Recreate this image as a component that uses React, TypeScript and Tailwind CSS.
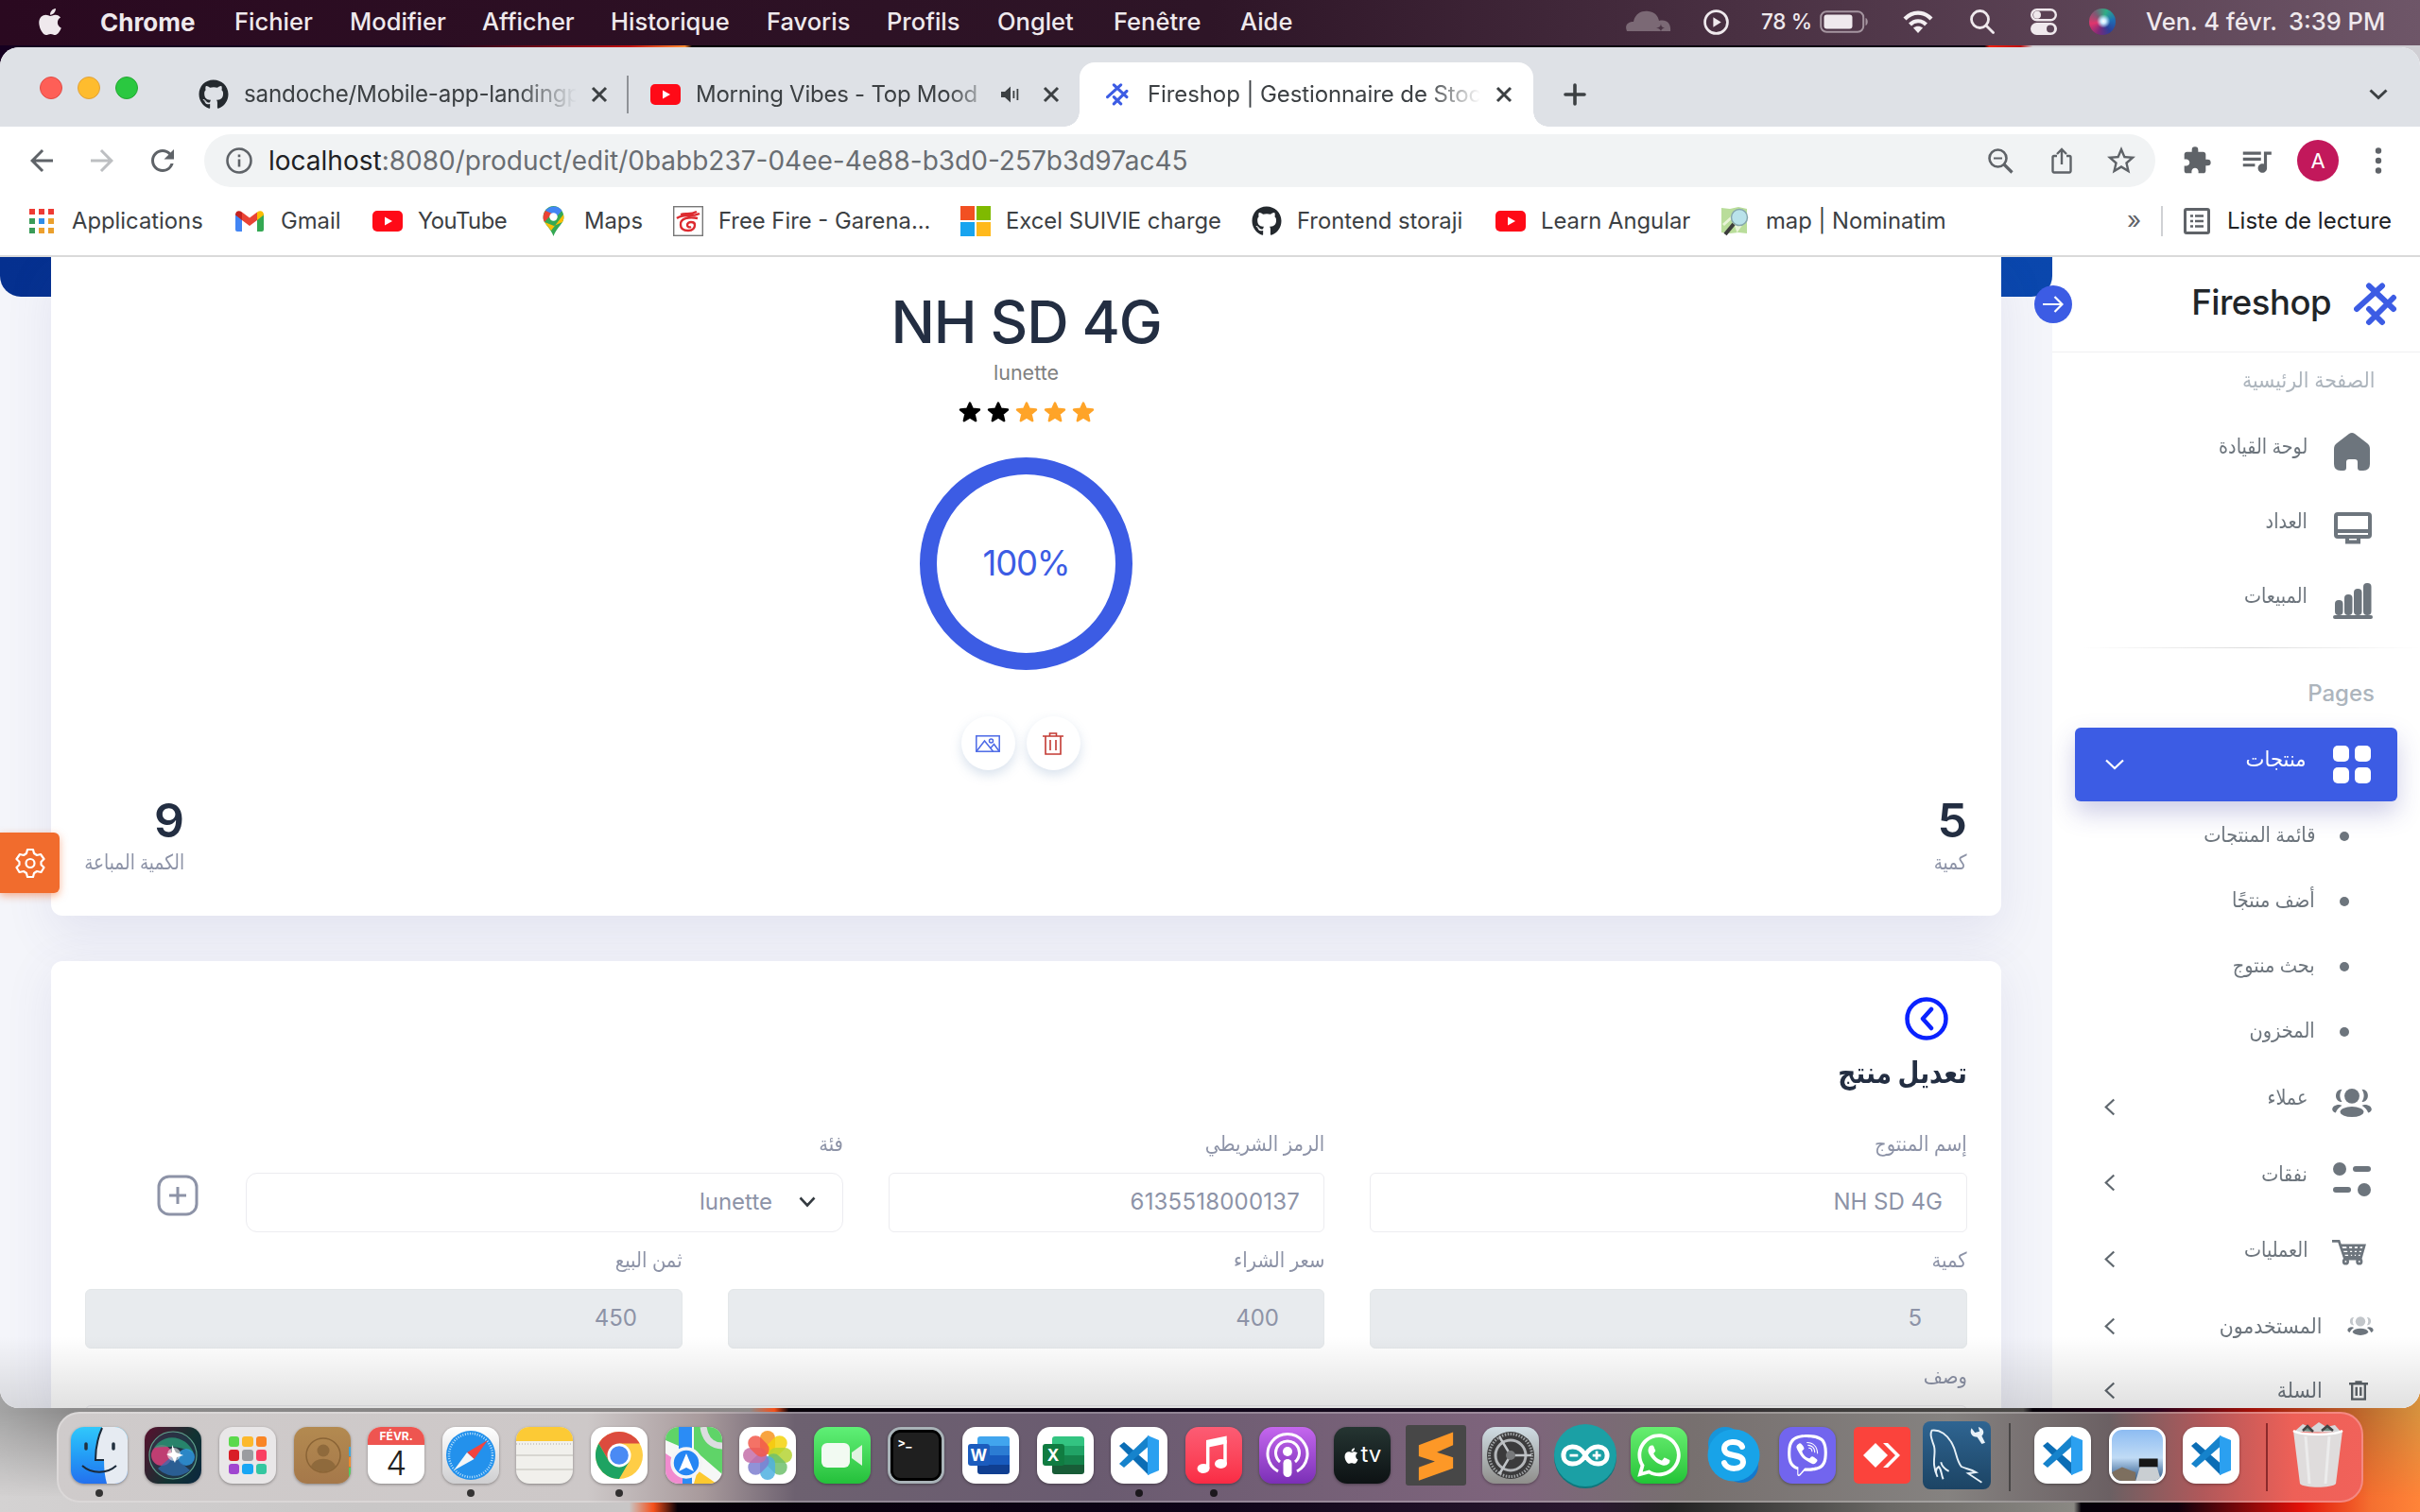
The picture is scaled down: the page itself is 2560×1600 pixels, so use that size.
import React from "react";
import { FaApple, FaGithub, FaWhatsapp, FaViber } from "react-icons/fa";
import { MdExtension, MdQueueMusic, MdStarBorder, MdArrowBack, MdArrowForward, MdRefresh } from "react-icons/md";

type Kids = { children?: React.ReactNode };

/* ---------- shared drawings ---------- */

const YouTube = () => (
  <svg viewBox="0 0 32 22" className="h-[22px] w-8 shrink-0">
    <rect width="32" height="22" rx="5" fill="#ff0a17" />
    <path d="M13 6.5v9l8-4.5z" fill="#fff" />
  </svg>
);

const Logo = ({ className }: { className: string }) => (
  <svg viewBox="0 0 46 46" className={className} fill="none" stroke="#3c5ce4" strokeWidth="6" strokeLinecap="round">
    <path d="M3 28 L30 3.5 M16 3.5 L42 28 M42 16 L16 42 M16 28 L30 42" />
  </svg>
);

const Siri = ({ className }: { className: string }) => (
  <div className={`${className} rounded-full bg-[radial-gradient(circle_at_54%_48%,#fff_0%,#c9ebff_12%,transparent_34%),conic-gradient(from_20deg,#2fae86,#1e6fb4,#2c3f9a,#7c2a78,#e0356d,#7d5a74,#2fae86)]`} />
);

const Close = () => (
  <svg viewBox="0 0 18 18" className="size-[18px] shrink-0" stroke="#3c4043" strokeWidth="3">
    <path d="M2 2l14 14M16 2L2 16" />
  </svg>
);

/* ---------- macOS menu bar ---------- */

const menus = [
  ["Chrome", "w-[142px] font-bold text-[26px]"],
  ["Fichier", "w-[122px]"],
  ["Modifier", "w-[140px]"],
  ["Afficher", "w-[136px]"],
  ["Historique", "w-[165px]"],
  ["Favoris", "w-[127px]"],
  ["Profils", "w-[117px]"],
  ["Onglet", "w-[123px]"],
  ["Fenêtre", "w-[134px]"],
  ["Aide", "w-[70px]"],
];

function MenuBar() {
  return (
    <header className="flex h-12 shrink-0 items-center bg-linear-to-r from-[#2a0920] via-[#2e1527] via-50% to-[#6e5668] pb-0.5 text-[25.5px] font-medium text-[#efe9ed]">
      <FaApple className="mr-[37px] ml-[37px] size-[32px]" />
      {menus.map(([t, c]) => (
        <span key={t} className={`${c} shrink-0 whitespace-nowrap`}>{t}</span>
      ))}
      <div className="flex flex-1 items-center text-[22.5px]">
        <svg viewBox="0 0 50 24" className="ml-[337px] h-6 w-[50px]" fill="#7b6975">
          <path d="M2 22c-3-7 2-10 7-10C11 2 19 0 25 1c7 1 10 5 11 10 8-2 13 3 12 11z" />
          <path d="M38 14q0 4 4 4.500-4 .5-4 4.500-0-4-5-4.500 5-.5 5-4.500" fill="#4a3444" />
        </svg>
        <svg viewBox="0 0 26 26" className="ml-[33px] size-[27px]" fill="none" stroke="#efe9ed" strokeWidth="2.6">
          <circle cx="13" cy="13" r="11.5" />
          <path d="M10 8v10l8-5z" fill="#efe9ed" stroke="none" />
        </svg>
        <span className="ml-[34px] w-[62px] whitespace-nowrap tracking-[-0.3px]">78 %</span>
        <svg viewBox="0 0 52 24" className="h-6 w-[52px]">
          <rect x="1.2" y="1.2" width="45" height="21.6" rx="6" fill="none" stroke="#a595a0" strokeWidth="2" />
          <rect x="4.5" y="4.5" width="30" height="15" rx="3" fill="#efe9ed" />
          <path d="M48.500 8c3 1 3 7 0 8z" fill="#a595a0" />
        </svg>
        <svg viewBox="0 0 32 24" className="ml-[36px] h-6 w-8" fill="none" stroke="#f3eef1" strokeWidth="4.200">
          <path d="M2 9c8-8.500 20-8.500 28 0M7.500 15c5-5 12-5 17 0" />
          <path d="M16 24l-5-5.500c3-2.500 7-2.500 10 0z" fill="#f3eef1" stroke="none" />
        </svg>
        <svg viewBox="0 0 26 26" className="ml-[39px] size-[26px]" fill="none" stroke="#efe9ed" strokeWidth="2.800" strokeLinecap="round">
          <circle cx="10.500" cy="10.500" r="9" />
          <path d="M17 17l7.500 7.500" />
        </svg>
        <svg viewBox="0 0 28 28" className="ml-[38px] size-7">
          <rect x="1.200" y="1.200" width="25.600" height="11" rx="5.500" fill="none" stroke="#efe9ed" strokeWidth="2.400" />
          <circle cx="7" cy="6.700" r="4" fill="#efe9ed" />
          <rect y="15" width="28" height="13" rx="6.500" fill="#efe9ed" />
          <circle cx="21" cy="21.500" r="4" fill="#5d4658" />
        </svg>
        <Siri className="ml-[34px] size-7" />
        <span className="ml-8 w-[151px] text-[25.500px] whitespace-nowrap">Ven. 4 févr.</span>
        <span className="text-[25.500px] whitespace-nowrap">3:39 PM</span>
      </div>
    </header>
  );
}

/* ---------- browser chrome ---------- */

function TabStrip() {
  return (
    <div className="flex h-[84px] shrink-0 items-end bg-[#dee1e6] text-[24px] text-[#3c4043]">
      <div className="mb-[29px] ml-[42px] flex gap-4">
        <i className="size-6 rounded-full border border-[#e14b45] bg-[#fe5f57]" />
        <i className="size-6 rounded-full border border-[#e0a13a] bg-[#febc2e]" />
        <i className="size-6 rounded-full border border-[#24a732] bg-[#2ac840]" />
      </div>
      <div className="flex h-[68px] w-[519px] items-center pl-16">
        <FaGithub className="size-8 shrink-0 text-[#24292e]" />
        <span className="mr-[15px] ml-4 w-[352px] mask-r-from-82% mask-r-to-100% text-[24.200px] tracking-[-0.2px] whitespace-nowrap">sandoche/Mobile-app-landingp</span>
        <Close />
        <i className="ml-[20px] h-10 w-0.5 shrink-0 bg-[#8f9297]" />
      </div>
      <div className="flex h-[68px] w-[477px] items-center pl-[23px]">
        <YouTube />
        <span className="ml-[16px] w-[303px] mask-r-from-88% mask-r-to-105% tracking-[-0.25px] whitespace-nowrap">Morning Vibes - Top Mood</span>
        <svg viewBox="0 0 20 18" className="ml-5 h-[18px] w-5 shrink-0" fill="#3c4043">
          <path d="M0 6h4l6-5.500v17L4 12H0zM12.500 5h1.800v8h-1.800zM16.500 3h1.800v12h-1.800z" />
        </svg>
        <i className="w-[24px] shrink-0" />
        <Close />
      </div>
      <div className="relative flex h-[68px] w-[480px] items-center rounded-t-2xl bg-white pl-7">
        <i className="absolute bottom-0 -left-4 size-4 bg-[radial-gradient(circle_at_0_0,transparent_15.500px,#fff_16px)]" />
        <i className="absolute -right-4 bottom-0 size-4 bg-[radial-gradient(circle_at_100%_0,transparent_15.500px,#fff_16px)]" />
        <Logo className="size-6 shrink-0" />
        <span className="mr-4 ml-[20px] w-[352px] mask-r-from-84% mask-r-to-100% tracking-[-0.1px] whitespace-nowrap">Fireshop | Gestionnaire de Stoc</span>
        <Close />
      </div>
      <div className="flex h-[68px] flex-1 items-center justify-between pr-[34px] pl-8">
        <svg viewBox="0 0 24 24" className="size-6" stroke="#3c4043" strokeWidth="3.600" strokeLinecap="round"><path d="M12 2v20M2 12h20" /></svg>
        <svg viewBox="0 0 20 12" className="h-3 w-5" fill="none" stroke="#3c4043" strokeWidth="3"><path d="M1.500 1.500L10 9.500l8.500-8" /></svg>
      </div>
    </div>
  );
}

function Toolbar() {
  return (
    <div className="flex h-[72px] shrink-0 items-center bg-white text-[#5f6368]">
      <div className="flex w-[216px] items-center gap-[28px] pl-[26px]">
        <MdArrowBack className="size-9" />
        <MdArrowForward className="size-9 text-[#bdbfc2]" />
        <MdRefresh className="size-9" />
      </div>
      <div className="flex h-14 w-[2064px] items-center rounded-full bg-[#f1f3f4] pl-[23px]">
        <svg viewBox="0 0 28 28" className="size-7 shrink-0" fill="none" stroke="#5f6368" strokeWidth="2.600">
          <circle cx="14" cy="14" r="12.500" />
          <path d="M14 12.500v8M14 7.500v2.800" />
        </svg>
        <span className="ml-[17px] flex-1 text-[28px] whitespace-nowrap text-[#696d72]"><b className="font-normal text-[#202124]">localhost</b>:8080/product/edit/0babb237-04ee-4e88-b3d0-257b3d97ac45</span>
        <div className="flex items-center pr-[18px]">
          <svg viewBox="0 0 27 27" className="size-[27px]" fill="none" stroke="#5f6368" strokeWidth="2.600"><circle cx="10.500" cy="10.500" r="9" /><path d="M17 17l8.500 8.500" strokeWidth="3.200" /><path d="M6 10.500h9" strokeWidth="1.800" /></svg>
          <svg viewBox="0 0 22 28" className="ml-[40px] h-7 w-[22px]" fill="none" stroke="#5f6368" strokeWidth="2.400"><path d="M6 9H3a1.500 1.500 0 00-1.500 1.500v14.500A1.500 1.500 0 003 26.500h16a1.500 1.500 0 001.500-1.500V10.500A1.500 1.500 0 0019 9h-3M11 18V2M6 7l5-5 5 5" /></svg>
          <MdStarBorder className="ml-[34px] size-9" />
        </div>
      </div>
      <MdExtension className="ml-[28px] size-8" />
      <MdQueueMusic className="ml-[28px] size-[38px]" />
      <span className="ml-[24px] grid size-11 place-items-center rounded-full bg-[#c2185b] text-[22px] text-white">A</span>
      <svg viewBox="0 0 8 28" className="ml-[38px] h-7 w-2" fill="#5f6368"><circle cx="4" cy="3.500" r="3.200" /><circle cx="4" cy="14" r="3.200" /><circle cx="4" cy="24.500" r="3.200" /></svg>
    </div>
  );
}

const Mark = ({ w, gap, icon, children }: Kids & { w: string; gap: string; icon: React.ReactNode }) => (
  <div className={`flex shrink-0 items-center whitespace-nowrap ${w} ${gap}`}>{icon}<span>{children}</span></div>
);

function Bookmarks() {
  const dots = ["#ee3a33", "#ee3a33", "#ee3a33", "#3a9b58", "#2f8de8", "#eaa02d", "#3a9b58", "#eda02d", "#eaa02d"];
  return (
    <div className="flex h-[64px] shrink-0 items-center bg-white pb-[8px] pl-[31px] text-[23.800px] text-[#3c4043]">
      <Mark w="w-[218px]" gap="gap-[19px]" icon={<div className="grid w-[26px] grid-cols-3 gap-1">{dots.map((c, i) => <i key={i} className="size-1.5" style={{ background: c }} />)}</div>}>Applications</Mark>
      <Mark w="w-[145px]" gap="gap-[18px]" icon={
        <svg viewBox="0 0 30 22" className="h-[22px] w-[30px]">
          <path d="M0 3v17a2 2 0 002 2h5V8z" fill="#4285f4" /><path d="M30 3v17a2 2 0 01-2 2h-5V8z" fill="#34a853" />
          <path d="M23 1.500V10l7-5.500C30 0 26-1 23 1.500z" fill="#fbbc04" /><path d="M7 10V1.500l8 6 8-6V10l-8 6z" fill="#ea4335" /><path d="M0 4.500L7 10V1.500C4-1 0 0 0 4.500z" fill="#c5221f" />
        </svg>}>Gmail</Mark>
      <Mark w="w-[180px] tracking-[-0.5px]" gap="gap-[16px]" icon={<YouTube />}>YouTube</Mark>
      <Mark w="w-[138px]" gap="gap-[21px]" icon={
        <svg viewBox="0 0 23 32" className="h-8 w-[23px]">
          <path d="M2 17C-2 10 3 0 11.500 0S25 10 21 17c-3 5-7 8-9.500 15C9 25 5 22 2 17z" fill="#34a853" />
          <path d="M2 17c3 4 5 6 7 9L22 9c1 3 0 6-1 8l-9 4z" fill="#fbbc04" /><path d="M3 5C6 0 16-2 20.500 5L12 14z" fill="#4285f4" /><path d="M3 5c-3 4-3 9-1 12L10 8z" fill="#ea4335" />
          <circle cx="11.500" cy="11.500" r="4.200" fill="#fff" />
        </svg>}>Maps</Mark>
      <Mark w="w-[304px]" gap="gap-4" icon={
        <svg viewBox="0 0 32 32" className="size-8" fill="none" stroke="#dd2a2f" strokeWidth="2.400">
          <rect x=".7" y=".7" width="30.600" height="30.600" stroke="#777" strokeWidth="1.400" />
          <path d="M4 13c8-6 14 0 24-5M8 9c5-2 10 1 17-3M26 13c-9-2-19 0-18 7 0 5 4 6 8 6 5 0 7-3 7-6 0-4-8-4-8 0 0 2 2 3 4 2" />
        </svg>}>Free Fire - Garena...</Mark>
      <Mark w="w-[308px]" gap="gap-4" icon={<div className="grid size-8 grid-cols-2 gap-0.5"><i className="bg-[#f25022]" /><i className="bg-[#7fba00]" /><i className="bg-[#18a4ef]" /><i className="bg-[#ffb91c]" /></div>}>Excel SUIVIE charge</Mark>
      <Mark w="w-[258px]" gap="gap-4" icon={<FaGithub className="size-8 text-[#24292e]" />}>Frontend storaji</Mark>
      <Mark w="w-[238px]" gap="gap-4" icon={<YouTube />}>Learn Angular</Mark>
      <Mark w="w-[430px]" gap="gap-4" icon={
        <svg viewBox="0 0 32 32" className="size-8">
          <path d="M1 2l9 1 9-2 9 2v26l-9-1-9 1-9-1z" fill="#b9dd9a" /><path d="M3 20l10-9 5 14 10-14" fill="none" stroke="#e9f4d8" strokeWidth="3" />
          <path d="M14 19L5 30" stroke="#3c3c3c" strokeWidth="4" /><circle cx="20" cy="12" r="8.500" fill="#b9e2ea" stroke="#86a7ad" strokeWidth="1.500" />
        </svg>}>map | Nominatim</Mark>
      <span className="-mt-1 w-[36px] text-[26px] text-[#5f6368]">»</span>
      <i className="mr-[22px] h-8 w-0.5 bg-[#cfd1d4]" />
      <svg viewBox="0 0 28 28" className="size-7 shrink-0" fill="none" stroke="#5f6368" strokeWidth="3">
        <rect x="1.500" y="1.500" width="25" height="25" rx="1.500" /><path d="M7 8.500h3M12 8.500h9M7 14h3M12 14h9M7 19.500h3M12 19.500h9" strokeWidth="2.500" />
      </svg>
      <span className="ml-[18px] text-[24px] whitespace-nowrap text-[#202124]">Liste de lecture</span>
    </div>
  );
}

/* ---------- web page ---------- */

const Star = ({ fill }: { fill: string }) => (
  <svg viewBox="0 0 24 24" className="size-6" fill={fill} stroke={fill} strokeWidth="2.400" strokeLinejoin="round">
    <path d="M12 2.500l2.800 6.300 7.200.7-5.400 4.700 1.600 7L12 17.500l-6.200 3.700 1.600-7L2 9.500l7.200-.7z" />
  </svg>
);

const RoundButton = ({ children }: Kids) => (
  <span className="grid size-[57px] place-items-center rounded-full bg-white shadow-[0_5px_12px_rgba(120,150,190,0.28)]">{children}</span>
);

/* Arabic text, slightly condensed towards its right edge */
const Ar = ({ className, children }: Kids & { className: string }) => (
  <span dir="rtl" className={`inline-block origin-right whitespace-nowrap ${className}`}>{children}</span>
);

const Stat = ({ n, children }: Kids & { n: string }) => (
  <div dir="rtl" className="flex w-[105px] flex-col">
    <b className="text-[50px] leading-[48px] font-semibold text-[#232e42]">{n}</b>
    <span className="h-[60px] text-[22px] leading-[40px] text-[#8d93a7]"><Ar className="scale-x-[0.84]">{children}</Ar></span>
  </div>
);

function ProductCard() {
  return (
    <section className="flex h-[697px] shrink-0 flex-col items-center rounded-b-xl bg-white px-9 shadow-[0_20px_50px_rgba(80,80,160,0.1)]">
      <h1 className="mt-[37px] text-[61.500px] leading-[64px] font-[550] tracking-[-1.200px] text-[#232e42]">NH SD 4G</h1>
      <span className="mt-1.5 text-[21.500px] leading-[30px] text-[#808080]">lunette</span>
      <div className="mt-[15px] flex gap-[6px]">
        {["#000", "#000", "#ffa428", "#ffa428", "#ffa428"].map((c, i) => <Star key={i} fill={c} />)}
      </div>
      <div className="mt-[36px] grid size-[225px] shrink-0 place-items-center rounded-full border-[18px] border-[#3c5ce4] text-[36.500px] tracking-[-1.200px] text-[#3c5ce4]">100%</div>
      <div className="mt-[49px] mr-[12px] flex gap-[12px]">
        <RoundButton>
          <svg viewBox="0 0 26 18" className="h-[18px] w-[26px]" fill="none" stroke="#4c69e6" strokeWidth="1.500"><rect x=".8" y=".8" width="24.400" height="16.400" /><path d="M1 17L9.500 6l9 11M16 13.500l3.500-4L25 17" /><circle cx="16.500" cy="6" r="2" /></svg>
        </RoundButton>
        <RoundButton>
          <svg viewBox="0 0 22 24" className="h-6 w-[22px]" fill="none" stroke="#c33a33" strokeWidth="1.600"><path d="M0 4h22M3 4v19h16V4M7.500 3.500V1h7v2.500M8 8v11M14 8v11" /></svg>
        </RoundButton>
      </div>
      <div className="mt-[29px] flex w-full flex-row-reverse justify-between">
        <Stat n="5">كمية</Stat>
        <Stat n="9">الكمية المباعة</Stat>
      </div>
    </section>
  );
}

const Field = ({ w, label, box, children }: Kids & { w: string; label: string; box: string }) => (
  <div className={`${w} flex shrink-0 flex-col`}>
    <label className="h-[46px] text-[22px] leading-[31px] text-[#8d93a7]"><Ar className="scale-x-[0.89]">{label}</Ar></label>
    <div dir="rtl" className={`flex h-[63px] items-center rounded-md border pb-px text-[24px] text-[#8d93a7] ${box}`}>{children}</div>
  </div>
);

function EditCard() {
  const open = "border-[#ececf0] bg-white px-[25px]";
  const off = "border-[#e3e7e9] bg-[#e8ebee] px-[47px]";
  return (
    <section dir="rtl" className="mt-12 flex h-[480px] shrink-0 flex-col rounded-t-xl bg-white px-9 pt-[38px] shadow-[0_10px_50px_rgba(80,80,160,0.1)]">
      <svg viewBox="0 0 46 46" className="mr-5 size-[46px] shrink-0" fill="none" stroke="#0a22ff" strokeWidth="4.500" strokeLinecap="round" strokeLinejoin="round"><circle cx="23" cy="23" r="20.500" /><path d="M28 13l-9 10 9 10" /></svg>
      <h2 className="mt-[10px] h-[84px] shrink-0 text-[31px] leading-[48px] font-semibold text-[#232e42]"><Ar className="scale-x-[0.85]">تعديل منتج</Ar></h2>
      <div className="flex h-[123px] shrink-0">
        <Field w="ml-12 w-[632px]" label="إسم المنتوج" box={open}><bdi>NH SD 4G</bdi></Field>
        <Field w="ml-12 w-[461px]" label="الرمز الشريطي" box={open}><span className="tracking-[0.2px]">6135518000137</span></Field>
        <Field w="w-[632px]" label="فئة" box="rounded-xl border-[#ececf0] bg-white px-7">
          <svg viewBox="0 0 18 12" className="ml-7 h-3 w-[18px]" fill="none" stroke="#343a40" strokeWidth="2.600"><path d="M1.500 1.500L9 9.500l7.500-8" /></svg>lunette
        </Field>
        <svg viewBox="0 0 44 44" className="mt-[48px] mr-[50px] size-11" fill="none" stroke="#8d93a7" strokeWidth="3"><rect x="2" y="2" width="40" height="40" rx="11" /><path d="M22 13v18M13 22h18" /></svg>
      </div>
      <div className="flex h-[123px] shrink-0 gap-12">
        <Field w="w-[632px]" label="كمية" box={off}>5</Field>
        <Field w="w-[631px]" label="سعر الشراء" box={off}>400</Field>
        <Field w="w-[632px]" label="ثمن البيع" box={off}>450</Field>
      </div>
      <Field w="w-full" label="وصف" box={open} />
    </section>
  );
}

const Back = () => (
  <svg viewBox="0 0 12 20" className="ml-[35px] h-[19px] w-3" fill="none" stroke="#5f676e" strokeWidth="2.300"><path d="M10.500 1.500L1.500 10l9 8.500" /></svg>
);

const NavItem = ({ h, icon, arrow, small, children }: Kids & { h: string; icon: React.ReactNode; arrow?: boolean; small?: boolean }) => (
  <div className={`flex shrink-0 flex-row-reverse items-center pr-[49px] ${h}`}>
    <span className={small ? "flex w-[28px] justify-center" : "flex w-11 justify-center"}>{icon}</span>
    <span dir="rtl" className={small ? "mr-[26px] flex-1 text-[22.500px]" : "mr-[26px] flex-1 pb-[11px] text-[22px]"}><Ar className={small ? "scale-x-[0.91]" : "scale-x-[0.87]"}>{children}</Ar></span>
    {arrow && <span className={small ? "mr-auto pl-[20px]" : "mr-auto pt-2 pl-[20px]"}><Back /></span>}
  </div>
);

const Users = ({ className, head = "#6d757d" }: { className: string; head?: string }) => (
  <svg viewBox="0 0 44 32" className={className} fill="#6d757d">
    <g fill={head}><circle cx="22" cy="8.500" r="8.300" /><path d="M11 1c-9 0-9 14 0 14-3-5-3-9 0-14zM33 1c9 0 9 14 0 14 3-5 3-9 0-14z" /></g>
    <ellipse cx="22" cy="26" rx="13" ry="5.800" /><path d="M8 18c-9 0-10 8-4 9 1-3 3-5 7-8zM36 18c9 0 10 8 4 9-1-3-3-5-7-8z" />
  </svg>
);

const SubItem = ({ children }: Kids) => (
  <div dir="rtl" className="flex h-[69px] shrink-0 items-center pr-[75px] text-[22px]">
    <i className="mb-0.5 ml-[26px] size-2.5 rounded-full bg-[#6d757d]" />
    <span className="pb-1"><Ar className="scale-x-[0.88]">{children}</Ar></span>
  </div>
);

function Sidebar() {
  return (
    <aside className="flex w-[389px] shrink-0 flex-col bg-white text-[#6d757d]">
      <div className="relative flex h-[101px] shrink-0 items-center justify-end gap-[24px] border-b border-[#f0f0f2] pr-6 pb-px">
        <span className="mb-0.5 text-[36.500px] font-medium tracking-[-0.500px] text-[#212529]">Fireshop</span>
        <Logo className="size-[46px]" />
        <span className="absolute top-[30px] -left-[19px] grid size-10 place-items-center rounded-full bg-[#3c5ce4]">
          <svg viewBox="0 0 22 18" className="h-[18px] w-[22px]" fill="none" stroke="#fff" strokeWidth="2.200"><path d="M0 9h20M12.500 1l8 8-8 8" /></svg>
        </span>
      </div>
      <div dir="rtl" className="h-[65px] shrink-0 pt-[11px] pr-12 text-[22.500px] leading-[36px] text-[#adb5bd]"><Ar className="scale-x-[0.91]">الصفحة الرئيسية</Ar></div>
      <NavItem h="h-[79px]" icon={<svg viewBox="0 0 38 40" className="mr-0.5 h-10 w-[38px]" fill="#6d757d"><path d="M16 1q3-2 6 0l13 10q3 2 3 6v16q0 7-7 7h-3q-3 0-3-3v-6q0-3-3-3h-6q-3 0-3 3v6q0 3-3 3H7q-7 0-7-7V17q0-4 3-6z" /></svg>}>لوحة القيادة</NavItem>
      <NavItem h="h-[79px]" icon={<svg viewBox="0 0 40 34" className="mt-1 h-[34px] w-10" fill="none" stroke="#6d757d" strokeWidth="4"><rect x="2" y="2" width="36" height="24" rx="2" /><path d="M2 20h36M12 31.500h16" strokeWidth="4" /><path d="M14 26v5M26 26v5" /></svg>}>العداد</NavItem>
      <NavItem h="h-[79px]" icon={<svg viewBox="0 0 42 38" className="h-[38px] w-[42px]" fill="#6d757d"><rect y="34" width="42" height="4" rx="2" /><rect x="2" y="18" width="8.500" height="16" rx="4" /><rect x="12" y="12" width="8.500" height="22" rx="4" /><rect x="22" y="6" width="8.500" height="28" rx="4" /><rect x="32" width="8.500" height="34" rx="4" /></svg>}>المبيعات</NavItem>
      <i className="mt-[10px] ml-8 h-px shrink-0 bg-linear-to-r from-transparent via-[#dcdcdc] to-transparent" />
      <div className="h-[84px] shrink-0 pt-[33px] pr-12 text-right text-[24px] leading-[30px] font-medium text-[#adb5bd]">Pages</div>
      <div className="mr-6 ml-6 flex h-[78px] shrink-0 flex-row-reverse items-center rounded-md bg-[#3c5ce4] pr-7 text-white shadow-[0_12px_26px_rgba(60,60,160,0.25)]">
        <span className="grid size-10 shrink-0 grid-cols-2 gap-1.5"><i className="rounded-[5px] bg-white" /><i className="rounded-[5px] bg-white" /><i className="rounded-[5px] bg-white" /><i className="rounded-[5px] bg-white" /></span>
        <span dir="rtl" className="mr-7 flex-1 pb-3 text-[23px]"><Ar className="scale-x-[0.92]">منتجات</Ar></span>
        <svg viewBox="0 0 20 12" className="ml-[32px] h-3 w-5" fill="none" stroke="#fff" strokeWidth="2.200"><path d="M1 1.500l9 8.500 9-8.500" /></svg>
      </div>
      <i className="h-[3px] shrink-0" />
      <SubItem>قائمة المنتجات</SubItem>
      <SubItem>أضف منتجًا</SubItem>
      <SubItem>بحث منتوج</SubItem>
      <SubItem>المخزون</SubItem>
      <NavItem h="h-20" arrow icon={<Users className="mr-0.5 h-8 w-11" />}>عملاء</NavItem>
      <NavItem h="h-[81px]" arrow icon={<svg viewBox="0 0 40 36" className="mr-0.5 h-9 w-10" fill="#6d757d"><circle cx="7" cy="7" r="7" /><rect x="21" y="4" width="19" height="6" rx="3" /><rect y="26" width="19" height="6" rx="3" /><circle cx="33" cy="29" r="7" /></svg>}>نفقات</NavItem>
      <NavItem h="h-[80px]" arrow icon={<svg viewBox="0 0 40 30" className="mr-2 mb-1.5 h-[30px] w-10" fill="none" stroke="#6d757d" strokeWidth="3"><path d="M0 2h8l7 21h20M9 7h29l-4 14H14M11 12h25M12 16.500h23M18 7l3 14M25 7v14M32 7l-3 14" /><circle cx="16" cy="26" r="2.500" fill="#fff" /><circle cx="32" cy="26" r="2.500" fill="#fff" /></svg>}>العمليات</NavItem>
      <NavItem h="h-[70px]" small arrow icon={<Users className="h-5 w-7" head="#c2c6ca" />}>المستخدمون</NavItem>
      <NavItem h="h-[66px]" small arrow icon={<svg viewBox="0 0 22 24" className="mr-1 h-[23px] w-5" fill="none" stroke="#5c6369" strokeWidth="2.600"><path d="M0 4h22M3.500 4v18h15V4M7 2h8M8.500 8v10M13.500 8v10" /></svg>}>السلة</NavItem>
    </aside>
  );
}

function WebPage() {
  return (
    <main className="relative flex h-[1218px] shrink-0 overflow-hidden bg-[#f4f5fa]">
      <div className="relative flex w-[2171px] shrink-0 flex-col px-[54px]">
        <i className="absolute top-0 left-0 h-[42px] w-full rounded-b-[22px] bg-linear-to-r from-[#05308f] to-[#0a47ad]" />
        <div className="relative flex flex-col"><ProductCard /><EditCard /></div>
        <span className="absolute top-[609px] left-0 grid h-16 w-[63px] place-items-center rounded-r-md bg-[#f16c2d] shadow-[0_3px_8px_rgba(241,108,45,0.5)]">
          <svg viewBox="0 0 32 32" className="size-8" fill="none" stroke="#fff" strokeWidth="2.200" strokeLinejoin="round">
            <path d="M13 2h6l1 4 3 2 4-1 3.500 5-3 3v3l3 3-3 5-4.500-1-3 2-1 4h-6l-1-4-3-2-4.500 1-3-5 3-3v-3l-3-3L5 7l4 1 3-2z" /><circle cx="16" cy="16.500" r="4.500" />
          </svg>
        </span>
      </div>
      <Sidebar />
      <i className="absolute bottom-0 left-0 h-[76px] w-full bg-linear-to-b from-transparent to-black/12" />
    </main>
  );
}

/* ---------- dock ---------- */

const Tile = ({ bg, children }: Kids & { bg: string }) => (
  <div className={`size-[60px] shrink-0 overflow-hidden rounded-[14px] shadow-[0_1px_3px_rgba(0,0,0,0.35)] ${bg}`}>{children}</div>
);
const Svg = ({ children }: Kids) => <svg viewBox="0 0 60 60" className="size-full">{children}</svg>;

const Code = () => (
  <Tile bg="bg-white"><Svg><path d="M9 20l5-4 30 26-4 9z" fill="#0b6db5" /><path d="M9 39l5 4 30-26-4-8z" fill="#1683cc" /><path d="M39 9l12 5v32l-12 5z" fill="#2ba0f0" /></Svg></Tile>
);

const Office = ({ c, l }: { c: string[]; l: string }) => (
  <Tile bg="bg-white"><div className="relative h-full">
    <div className="absolute top-2.5 left-4 flex h-10 w-[34px] flex-col overflow-hidden rounded-[3px]">{c.slice(0, 4).map((x) => <i key={x} className="flex-1" style={{ background: x }} />)}</div>
    <b className="absolute top-[18px] left-1.5 grid size-[23px] place-items-center rounded-[3px] text-[17px] text-white" style={{ background: c[4] }}>{l}</b>
  </div></Tile>
);

const petals = ["#f7941e", "#f5d20c", "#b5d334", "#6fc06c", "#4fb0e0", "#7e7fd0", "#c46fa8", "#f2594b"];
const launch = ["#5bd94c", "#fcb92c", "#f98525", "#d91e26", "#9a9ca0", "#fa3f62", "#a046d0", "#18a6f4", "#34c7a0"];

const apps: { dot?: boolean; el: React.ReactNode }[] = [
  { dot: true, el: <Tile bg="bg-linear-to-b from-[#31c8fb] to-[#2470ee]"><Svg><path d="M33 0C28 12 26 24 26 35h9c0 10 1 18 3 25h22V0z" fill="#e6ebf2" /><path d="M16 18v5M45 18v5" stroke="#22303f" strokeWidth="3.500" strokeLinecap="round" /><path d="M12 41c10 9 26 9 36 0M33 1c-5 11-7 23-7 34h9" fill="none" stroke="#1b2a3a" strokeWidth="2" /></Svg></Tile> },
  { el: <Tile bg="bg-[linear-gradient(120deg,#59102e,#123332_60%,#0b2740)]"><Svg>
    <circle cx="30" cy="30" r="25" fill="#2a3a52" fillOpacity=".6" stroke="#5fa08c" strokeWidth="1.200" />
    <circle cx="18" cy="30" r="11" fill="#d9417a" fillOpacity=".85" /><path d="M10 22c10-16 34-14 42 6-12-8-28-8-42-6z" fill="#2aa57c" fillOpacity=".7" /><circle cx="44" cy="32" r="9" fill="#2f9be6" fillOpacity=".8" /><path d="M14 44l16-14 18 16c-10 8-24 8-34-2z" fill="#2f6fb5" fillOpacity=".7" />
    <circle cx="31" cy="29" r="7" fill="#fff" fillOpacity=".55" /><path d="M29 19l4 8 8 3-7 2-2 6-3-6-6-3 6-2z" fill="#fff" />
  </Svg></Tile> },
  { el: <Tile bg="bg-[#e9e7e8] p-2.5"><div className="grid h-full grid-cols-3 gap-[3px]">{launch.map((c) => <i key={c} className="rounded-[3px]" style={{ background: c }} />)}</div></Tile> },
  { el: <Tile bg="bg-linear-to-b from-[#b38a50] to-[#a5784a]"><Svg><g fill="none" stroke="#8a6436" strokeWidth="1.500"><circle cx="31" cy="30" r="18" /></g><circle cx="31" cy="25" r="6.500" fill="#8f6a3c" /><path d="M18 42c3-11 23-11 26 0-7 7-19 7-26 0z" fill="#8f6a3c" /><path d="M58 21h2v10h-2z" fill="#3fa5d8" /><path d="M58 32h2v10h-2z" fill="#f08a2d" /><path d="M58 43h2v10h-2z" fill="#4ccf62" /></Svg></Tile> },
  { el: <Tile bg="bg-white"><div className="flex h-full flex-col items-center"><b className="w-full bg-[#ee5550] text-center text-[12px] leading-[19px] text-white">FÉVR.</b><span className="text-[35px] leading-[38px] font-light text-[#222]">4</span></div></Tile> },
  { dot: true, el: <Tile bg="bg-linear-to-b from-white to-[#cfcfd1]"><Svg><circle cx="30" cy="30" r="26" fill="#2391ec" /><circle cx="30" cy="30" r="23" fill="none" stroke="#b9e0fb" strokeWidth="2.500" strokeDasharray="1 1.600" /><path d="M48 14L33.500 34 26 27z" fill="#f1433e" /><path d="M12 46l14-19 7.500 7z" fill="#f4f6f8" /></Svg></Tile> },
  { el: <Tile bg="bg-[#f1f0ec]"><Svg><path d="M0 0h60v15H0z" fill="#fcca35" /><path d="M0 30h60M0 45h60" stroke="#cfcdc7" strokeWidth="1.500" /><path d="M0 18h60" stroke="#aaa" strokeDasharray="1 2" /></Svg></Tile> },
  { dot: true, el: <Tile bg="bg-white"><Svg><circle cx="30" cy="30" r="25" fill="#ffcd46" /><path d="M8.300 17.500A25 25 0 0151.700 17.500H30L19.200 36.300z" fill="#dc4b3e" /><path d="M8.300 17.500A25 25 0 0030 55L40.800 36.300 30 42.500 19.200 36.300z" fill="#1ea362" /><circle cx="30" cy="30" r="12.500" fill="#fff" /><circle cx="30" cy="30" r="9.800" fill="#4a8af4" /></Svg></Tile> },
  { el: <Tile bg="bg-[#f6f7f6]"><Svg><path d="M0 0h14v20L0 14zM30 0h30v50L30 24z" fill="#5fd468" /><path d="M14 0h14v60H14z" fill="#2b8cf5" /><path d="M0 28l18 12v20H0z" fill="#f08bcf" /><path d="M30 60l4-14 20 14z" fill="#fdc92f" /><path d="M40 0c2 14 10 20 20 20" fill="none" stroke="#dcdde0" strokeWidth="7" /><circle cx="22" cy="38" r="15" fill="#2686f4" stroke="#f4f4f6" strokeWidth="3.500" /><path d="M22 28l8 19-8-4-8 4z" fill="#fff" /></Svg></Tile> },
  { el: <Tile bg="bg-white"><Svg>{petals.map((c, i) => <rect key={c} x="22" y="4" width="16" height="25" rx="8" fill={c} opacity=".85" transform={`rotate(${i * 45} 30 30)`} />)}</Svg></Tile> },
  { el: <Tile bg="bg-linear-to-b from-[#5ff076] to-[#23c03a]"><Svg><rect x="8" y="17" width="30" height="26" rx="6" fill="#f2faf2" /><path d="M40 27l11-8v22l-11-8z" fill="#e1f3e1" /></Svg></Tile> },
  { el: <Tile bg="border-[3px] border-[#a9b3b8] bg-[#1f1f1f]"><div className="size-full rounded-[10px] border-[3px] border-black pl-1 text-[13px] leading-5 font-bold text-white">&gt;_</div></Tile> },
  { el: <Office l="W" c={["#41a5ee", "#2b7cd3", "#185abd", "#103f91", "#1b5cbe"]} /> },
  { el: <Office l="X" c={["#33c481", "#21a366", "#15824b", "#185c37", "#107c41"]} /> },
  { dot: true, el: <Code /> },
  { dot: true, el: <Tile bg="bg-linear-to-b from-[#fc5c74] to-[#fa2a44]"><Svg><path d="M42 14v25" fill="none" stroke="#fff" strokeWidth="3.500" /><path d="M22 14l21.700-4.500v8L22 22z" fill="#fff" /><path d="M23.700 16v28" stroke="#fff" strokeWidth="3.500" /><ellipse cx="19" cy="44" rx="6.500" ry="5" fill="#fff" /><ellipse cx="37.500" cy="39" rx="6.500" ry="5" fill="#fff" /></Svg></Tile> },
  { el: <Tile bg="bg-linear-to-b from-[#c567ee] to-[#7b2fb6]"><Svg><g fill="none" stroke="#fff" strokeWidth="3"><path d="M20 47a21 21 0 1120 0M22 37a12.500 12.500 0 1116 0" /></g><circle cx="30" cy="26" r="5" fill="#fff" /><rect x="25.500" y="34" width="9" height="19" rx="4.500" fill="#fff" /></Svg></Tile> },
  { el: <Tile bg="bg-linear-to-b from-[#253532] to-[#0d1214]"><div className="flex h-full items-center justify-center text-[24px] text-white"><FaApple className="size-[19px]" /><span className="-mt-0.5">tv</span></div></Tile> },
  { el: <div className="h-16 w-16 shrink-0 rounded-[3px] bg-[#474747]"><Svg><path d="M13 20l34-13v13l-16 7 16 5v11L13 55V42l16-6-16-5z" fill="#fd9827" /></Svg></div> },
  { el: <Tile bg="bg-linear-to-b from-[#d0dde4] to-[#8f8e8b]"><Svg><circle cx="30" cy="30" r="25" fill="#3b3b3c" /><circle cx="30" cy="30" r="22.500" fill="none" stroke="#a0a3a5" strokeWidth="3" strokeDasharray="1.500 1.500" /><circle cx="30" cy="30" r="16" fill="none" stroke="#b4b7ba" strokeWidth="3" /><path d="M30 30L18 10M30 30h22M30 30L18 50" stroke="#c0c4c7" strokeWidth="2.500" /><circle cx="30" cy="30" r="5" fill="#77797b" /></Svg></Tile> },
  { el: <div className="size-[66px] shrink-0 rounded-full bg-[#1ba0a5] shadow-[0_2px_0_#0d777c]"><Svg><path d="M30 30c-6-12-21-10-21 0s15 12 21 0c6-12 21-10 21 0s-15 12-21 0z" fill="none" stroke="#fff" strokeWidth="4.500" /><path d="M15 30h8M37 30h8M41 26v8" stroke="#fff" strokeWidth="2.500" /></Svg></div> },
  { el: <Tile bg="bg-linear-to-b from-[#66ee70] to-[#1fc436] p-1"><FaWhatsapp className="size-[52px] text-white" /></Tile> },
  { el: <Svg><circle cx="21" cy="18" r="18" fill="#1795da" /><circle cx="38" cy="41" r="18" fill="#1479cd" /><circle cx="30" cy="30" r="27.500" fill="#18a3e8" /><path d="M39 21c-3-7-19-7-19 2 0 10 20 4 20 14 0 9-17 9-20 1" fill="none" stroke="#fff" strokeWidth="6" strokeLinecap="round" /></Svg> },
  { el: <Tile bg="bg-[#7265ee] p-2"><FaViber className="size-11 text-white" /></Tile> },
  { el: <div className="size-[60px] shrink-0 rounded-[5px] bg-[#fb433c]"><Svg><path d="M10 30l13-13 13 13-13 13z" fill="#fff" /><path d="M31 17h5l13 13-13 13h-5l13-13z" fill="#fff" /></Svg></div> },
  { el: <div className="size-[72px] shrink-0 rounded-[8px] bg-linear-to-b from-[#2f6592] to-[#1c4464]"><Svg><path d="M18 51c-2-4-1-8-4-11-3 2-3 5-1 9C7 36 12 30 10 22 8 16 6 12 8 8c7-1 14 4 18 12 4 7 3 13 8 20 4 2 8 2 13 5l-7 1 12 8M16 36c1 4 3 6 7 8" fill="none" stroke="#e6f0f7" strokeWidth="1.600" /><path d="M43 6l3 4 4-1-1-4c6 2 5 6 3 8l3 6-3 1-4-6c-5 0-7-4-5-8z" fill="#e8f1f8" /></Svg></div> },
];

const Cell = ({ dot, children }: Kids & { dot?: boolean }) => (
  <div className="relative flex h-[88px] w-[78.6px] shrink-0 items-center justify-center">
    <div className="flex size-[60px] items-center justify-center">{children}</div>
    {dot && <i className="absolute bottom-0 size-2 rounded-full bg-black/75" />}
  </div>
);

function Dock() {
  return (
    <footer className="absolute top-[1494px] left-[60px] flex h-24 w-[2440px] rounded-[24px] border-2 border-white/25 bg-[linear-gradient(90deg,#cfcbcb_0%,#cdc8c8_23%,#a89a9c_28%,#6d6170_32%,#6a5b70_45%,#7e647c_63%,#77706f_71%,#858280_82%,#6b6063_89%,#b0585a_93%,#ee6057_97%,#f1625a_100%)] bg-origin-border pl-[3.500px]">
      {apps.map((a, i) => <Cell key={i} dot={a.dot}>{a.el}</Cell>)}
      <i className="mx-[16px] mt-2.5 h-[72px] w-0.5 bg-black/40" />
      <Cell><Code /></Cell>
      <Cell>
        <Tile bg="border-[3px] border-white bg-linear-to-b from-[#8dbcf2] via-[#c0dbf5] via-55% to-[#2a5584]"><Svg><path d="M0 50l12-6 16 6v10H0z" fill="#7d6f5f" /><path d="M32 34h22v10H32z" fill="#161616" /><path d="M33 44h20l5 16H28z" fill="#c9ced2" /></Svg></Tile>
      </Cell>
      <Cell><Code /></Cell>
      <i className="mr-[14px] ml-[18px] mt-2.5 h-[72px] w-0.5 bg-[#8b2a2c]" />
      <Cell>
        <svg viewBox="0 0 56 70" className="h-[70px] w-14 shrink-0">
          <path d="M3 10L12 2l9 4 8-6 8 5 9-2 7 8z" fill="#d7d8da" /><path d="M12 9l5-5 6 6M32 9l6-5 6 5" stroke="#444" strokeWidth="2.500" fill="#6b8a80" />
          <path d="M2 9c8 5 44 5 52 0l-7 56c-4 5-34 5-38 0z" fill="#dfdcdc" /><path d="M2 9c8 5 44 5 52 0" stroke="#fff" strokeWidth="2.500" fill="none" /><path d="M15 15l4 50M40 15l-4 50" stroke="#ececec" strokeWidth="3" />
        </svg>
      </Cell>
    </footer>
  );
}

export default function App() {
  return (
    <div className="relative flex h-[1600px] w-[2560px] flex-col overflow-hidden bg-[linear-gradient(90deg,#150020_0%,#150020_18%,#c01010_26%,#ff8a30_28.300%,#000_28.600%,#0a0014_80%,#0a0014_82%,#ef2010_82.200%,#c01010_83.500%,#d0cfd4_84%)] font-['Inter','DejaVu_Sans',sans-serif]">
      <i className="absolute top-[1440px] left-0 h-40 w-full bg-[linear-gradient(90deg,#d4d2d2_0%,#c9c7c7_15%,#c8c6c6_26%,#f5501a_27%,#060008_28%,#0e0418_50%,#2b1930_66%,#222_69%,#6a6865_78%,#8a8883_85.700%,#050008_86%,#10000c_90%,#e01008_95%,#f57030_98%,#ff8438_100%)]" />
      <i className="absolute top-[1440px] left-0 h-[160px] w-full mask-b-from-34% mask-b-to-90% bg-[linear-gradient(90deg,#a4a4a4_0%,#8c8b8b_3%,#858383_20%,#8c8888_31%,#f5501a_32%,#060008_32.600%,#0e0418_50%,#1b1020_66%,#3a3837_74%,#4a4846_83.600%,#050008_84%,#26001c_89%,#a01008_93%,#c07030_98%,#d8923e_100%)]" />
      <MenuBar />
      <div className="relative mt-0.5 flex h-[1440px] shrink-0 flex-col overflow-hidden rounded-[20px] bg-white">
        <TabStrip />
        <Toolbar />
        <Bookmarks />
        <i className="h-0.5 shrink-0 bg-[#dadada]" />
        <WebPage />
      </div>
      <Dock />
    </div>
  );
}
